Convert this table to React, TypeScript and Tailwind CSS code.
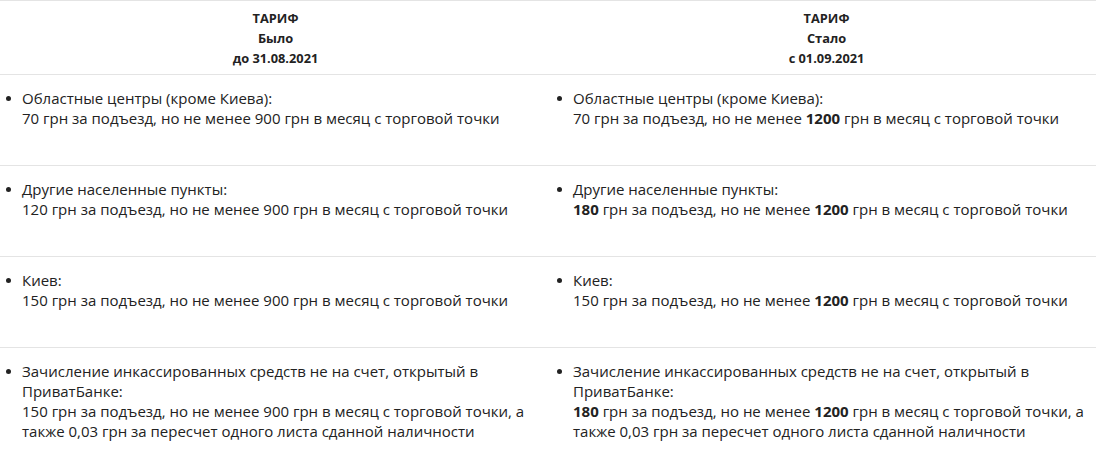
const rows = [
  {
    title: 'Областные центры (кроме Киева):',
    before: <>70 грн за подъезд, но не менее 900 грн в месяц с торговой точки</>,
    after: (
      <>
        70 грн за подъезд, но не менее <b>1200</b> грн в месяц с торговой точки
      </>
    ),
  },
  {
    title: 'Другие населенные пункты:',
    before: <>120 грн за подъезд, но не менее 900 грн в месяц с торговой точки</>,
    after: (
      <>
        <b>180</b> грн за подъезд, но не менее <b>1200</b> грн в месяц с торговой точки
      </>
    ),
  },
  {
    title: 'Киев:',
    before: <>150 грн за подъезд, но не менее 900 грн в месяц с торговой точки</>,
    after: (
      <>
        150 грн за подъезд, но не менее <b>1200</b> грн в месяц с торговой точки
      </>
    ),
  },
  {
    title: 'Зачисление инкассированных средств не на счет, открытый в ПриватБанке:',
    before: (
      <>
        150 грн за подъезд, но не менее 900 грн в месяц с торговой точки, а также 0,03 грн за
        пересчет одного листа сданной наличности
      </>
    ),
    after: (
      <>
        <b>180</b> грн за подъезд, но не менее <b>1200</b> грн в месяц с торговой точки, а также
        0,03 грн за пересчет одного листа сданной наличности
      </>
    ),
  },
];

function Cell({ title, children }: { title: string; children: React.ReactNode }) {
  return (
    <div className="border-t border-[#e4e4e4] pt-[13px] pb-[37px] pl-[22px] pr-4">
      <div className="relative">
        <span className="absolute -left-[16px] top-[8px] w-[5px] h-[5px] rounded-full bg-[#222]" />
        {title}
        <br />
        {children}
      </div>
    </div>
  );
}

function HeaderCell({ label, date }: { label: string; date: string }) {
  return (
    <div className="border-t border-[#e4e4e4] pt-[7px] pb-[6px] text-center text-[12.8px] leading-5 font-bold">
      <div>ТАРИФ</div>
      <div>{label}</div>
      <div>{date}</div>
    </div>
  );
}

export default function App() {
  return (
    <div
      className="w-[1096px] h-[476px] overflow-hidden bg-white text-[#222] text-[15px] leading-5"
      style={{ fontFamily: '"Open Sans", sans-serif' }}
    >
      <div className="grid grid-cols-[551px_551px] w-[1102px]">
        <HeaderCell label="Было" date="до 31.08.2021" />
        <HeaderCell label="Стало" date="с 01.09.2021" />
        {rows.map((r) => (
          <>
            <Cell key={r.title + 'a'} title={r.title}>
              {r.before}
            </Cell>
            <Cell key={r.title + 'b'} title={r.title}>
              {r.after}
            </Cell>
          </>
        ))}
      </div>
    </div>
  );
}
